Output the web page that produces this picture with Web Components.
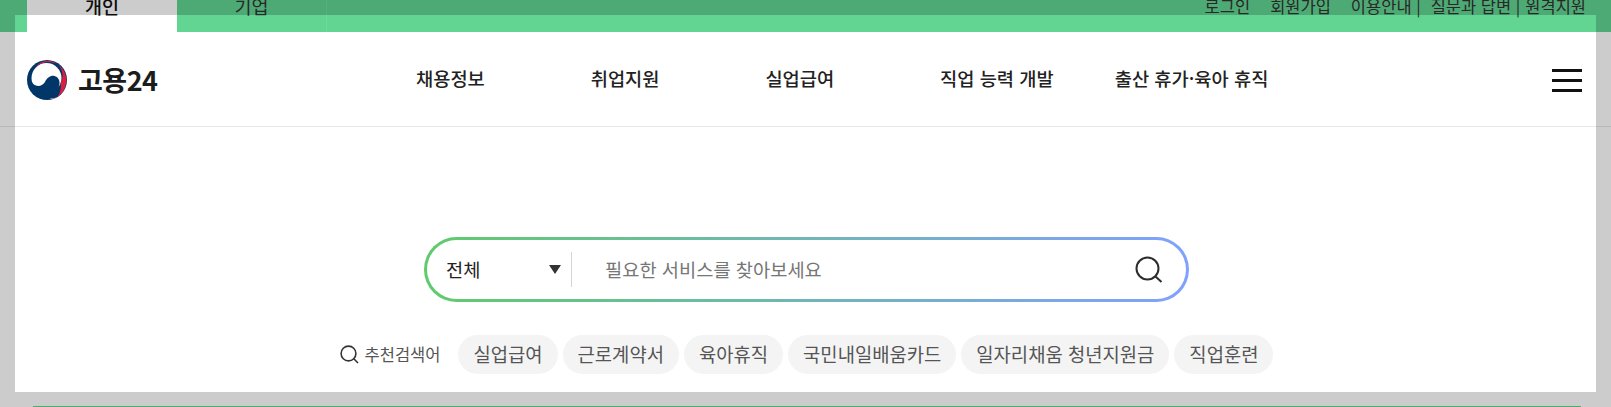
<!DOCTYPE html>
<html lang="ko">
<head>
<meta charset="utf-8">
<title>고용24</title>
<style>
    html, body {
        margin: 0;
        height: 407px;
        overflow: hidden;
        background: #fff;
        font-family: "Noto Sans CJK KR", "Noto Sans", sans-serif;
        color: #222;
    }
</style>
</head>
<body>
<top-bar>
    <top-tab active>개인</top-tab>
    <top-tab>기업</top-tab>
    <a slot="util">로그인</a>
    <a slot="util">회원가입</a>
    <a slot="util" style="margin-right:-10px">이용안내 |</a>
    <a slot="util" style="margin-right:-15px">질문과 답변 |</a>
    <a slot="util">원격지원</a>
</top-bar>
<site-header>
    <nav-item>채용정보</nav-item>
    <nav-item>취업지원</nav-item>
    <nav-item>실업급여</nav-item>
    <nav-item>직업 능력 개발</nav-item>
    <nav-item>출산 휴가·육아 휴직</nav-item>
</site-header>
<search-box></search-box>
<keyword-row>
    <key-chip>실업급여</key-chip>
    <key-chip>근로계약서</key-chip>
    <key-chip>육아휴직</key-chip>
    <key-chip>국민내일배움카드</key-chip>
    <key-chip>일자리채움 청년지원금</key-chip>
    <key-chip>직업훈련</key-chip>
</keyword-row>
<next-card></next-card>
<dim-hole></dim-hole>

<script>
class TopBar extends HTMLElement {
    constructor() {
        super()
        this.attachShadow({ mode: 'open' })
        this.shadowRoot.innerHTML = `
            <style>
                :host {
                    display: flex;
                    justify-content: space-between;
                    height: 32px;
                    padding: 0 25px 0 27px;
                    background: #62d592;
                    overflow: hidden;
                }
                #tabs { display: flex; }
                #util {
                    display: flex;
                    gap: 20px;
                    font-size: 16.5px;
                    line-height: 13px;
                    color: #333;
                }
                ::slotted(a) { white-space: pre; }
            </style>
            <div id=tabs><slot></slot></div>
            <div id=util><slot name=util></slot></div>
        `
    }
}

class TopTab extends HTMLElement {
    constructor() {
        super()
        this.attachShadow({ mode: 'open' })
        this.shadowRoot.innerHTML = `
            <style>
                :host {
                    display: block;
                    box-sizing: border-box;
                    width: 150px;
                    font-size: 18.5px;
                    line-height: 13px;
                    text-align: center;
                    color: #333;
                    border-right: 1px solid #6ddb9b;
                }
                :host([active]) {
                    background: #fff;
                    color: #111;
                    font-weight: 500;
                    border-right: 0;
                }
            </style>
            <slot></slot>
        `
    }
}

class SiteHeader extends HTMLElement {
    constructor() {
        super()
        this.attachShadow({ mode: 'open' })
        this.shadowRoot.innerHTML = `
            <style>
                :host {
                    display: flex;
                    align-items: center;
                    height: 94px;
                    padding: 0 29px 0 27px;
                    border-bottom: 1px solid #e8e8e8;
                    background: #fff;
                }
                #logo {
                    display: flex;
                    align-items: center;
                    gap: 9px;
                    width: 389px;
                    margin-top: 1px;
                    font-size: 27px;
                    font-weight: 700;
                    letter-spacing: -.5px;
                    color: #1c1c1c;
                }
                #logo svg { display: block; }
                nav { display: flex; flex: 1; margin-top: -4px; }
                #menu { display: grid; gap: 7px; width: 30px; margin-top: 2px; }
                #menu i { display: block; height: 3px; background: #111; }
            </style>
            <div id=logo>
                <svg width="42" height="40" viewBox="1 0 42 40">
                    <circle cx="21" cy="20" r="20" fill="#003668"/>
                    <circle cx="20.5" cy="18" r="15" fill="#fff"/>
                    <path d="M9 8 A18 18 0 0 1 39 13 A20 20 0 0 1 31 37.3 A18 18 0 0 0 34.5 23 A14.5 14.5 0 0 0 9 8Z" fill="#d81f3f"/>
                    <path d="M31 37.3 A20 20 0 0 1 25 39.6 L24 38.5 A17 17 0 0 0 31 37.3Z" fill="#f2b4c0"/>
                    <path d="M5 20 C7 27 15 28 19 22 C21 17.5 25 15 28.5 16 C32 17 34 20 33.5 24 C33 29 29 34 21 36 L8 32Z" fill="#003668"/>
                </svg>
                <span>고용24</span>
            </div>
            <nav><slot></slot></nav>
            <div id=menu><i></i><i></i><i></i></div>
        `
    }
}

class NavItem extends HTMLElement {
    constructor() {
        super()
        this.attachShadow({ mode: 'open' })
        this.shadowRoot.innerHTML = `
            <style>
                :host {
                    display: block;
                    width: 174.7px;
                    font-size: 18.7px;
                    font-weight: 500;
                    color: #222;
                    white-space: nowrap;
                }
            </style>
            <slot></slot>
        `
    }
}

class SearchBox extends HTMLElement {
    constructor() {
        super()
        this.attachShadow({ mode: 'open' })
        this.shadowRoot.innerHTML = `
            <style>
                :host {
                    display: flex;
                    align-items: center;
                    box-sizing: border-box;
                    width: 765px;
                    height: 65px;
                    margin: 110px 0 0 424px;
                    padding: 0 23px 0 19px;
                    border: 3px solid transparent;
                    border-radius: 33px;
                    background:
                        linear-gradient(#fff, #fff) padding-box,
                        linear-gradient(90deg, #5fcb6c, #80a1ff) border-box;
                    font-size: 18.7px;
                }
                #scope {
                    display: flex;
                    align-items: center;
                    justify-content: space-between;
                    box-sizing: border-box;
                    width: 126px;
                    height: 35px;
                    padding-right: 10px;
                    border-right: 1px solid #d4d4d4;
                    color: #222;
                }
                #scope span:first-child { margin-bottom: 3px; }
                #caret {
                    width: 0;
                    height: 0;
                    border: 6.5px solid transparent;
                    border-top: 9px solid #333;
                    border-bottom: 0;
                }
                #hint { flex: 1; margin: 0 0 3px 33px; color: #767676; }
                svg { display: block; }
            </style>
            <div id=scope><span>전체</span><span id=caret></span></div>
            <span id=hint>필요한 서비스를 찾아보세요</span>
            <svg width="28" height="28" viewBox="0 0 28 28" fill="none" stroke="#2d2d2d">
                <circle cx="12.5" cy="12.5" r="11" stroke-width="2"/>
                <path d="M20.5 20.5 L26.5 26" stroke-width="2"/>
            </svg>
        `
    }
}

class KeywordRow extends HTMLElement {
    constructor() {
        super()
        this.attachShadow({ mode: 'open' })
        this.shadowRoot.innerHTML = `
            <style>
                :host {
                    display: flex;
                    justify-content: center;
                    align-items: center;
                    gap: 5px;
                    margin: 33px 0 0 2px;
                }
                #label {
                    display: flex;
                    align-items: center;
                    gap: 6px;
                    margin-right: 13px;
                    font-size: 16.5px;
                    color: #555;
                }
                #label span { margin-bottom: 2px; }
                svg { display: block; }
            </style>
            <div id=label>
                <svg width="19" height="19" viewBox="0 0 19 19" fill="none" stroke="#333" stroke-width="1.6">
                    <circle cx="8.5" cy="8.5" r="7.4"/>
                    <path d="M13.8 13.8 L18 18"/>
                </svg>
                <span>추천검색어</span>
            </div>
            <slot></slot>
        `
    }
}

class KeyChip extends HTMLElement {
    constructor() {
        super()
        this.attachShadow({ mode: 'open' })
        this.shadowRoot.innerHTML = `
            <style>
                :host {
                    display: flex;
                    align-items: center;
                    box-sizing: border-box;
                    height: 39px;
                    padding: 0 15px 2px;
                    border-radius: 20px;
                    background: #f4f4f4;
                    font-size: 18.8px;
                    color: #555;
                    white-space: nowrap;
                }
            </style>
            <slot></slot>
        `
    }
}

class NextCard extends HTMLElement {
    constructor() {
        super()
        this.attachShadow({ mode: 'open' })
        this.shadowRoot.innerHTML = `
            <style>
                :host {
                    display: block;
                    height: 1px;
                    margin: 32px 30px 0 33px;
                    background: #62d592;
                }
            </style>
        `
    }
}

// the highlighted window: everything around it is dimmed
class DimHole extends HTMLElement {
    constructor() {
        super()
        this.attachShadow({ mode: 'open' })
        this.shadowRoot.innerHTML = `
            <style>
                :host {
                    position: absolute;
                    left: 15px;
                    top: 15px;
                    width: 1581px;
                    height: 377px;
                    box-shadow: 0 0 0 2000px rgba(0, 0, 0, .2);
                }
            </style>
        `
    }
}

customElements.define('top-bar', TopBar)
customElements.define('top-tab', TopTab)
customElements.define('site-header', SiteHeader)
customElements.define('nav-item', NavItem)
customElements.define('search-box', SearchBox)
customElements.define('keyword-row', KeywordRow)
customElements.define('key-chip', KeyChip)
customElements.define('next-card', NextCard)
customElements.define('dim-hole', DimHole)
</script>
</body>
</html>
